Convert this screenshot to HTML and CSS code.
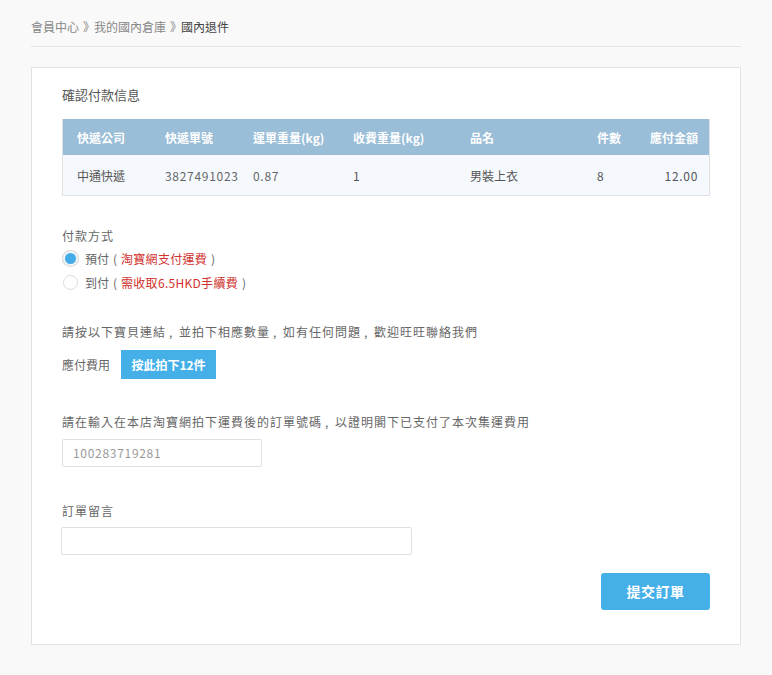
FILE: index.html
```html
<!DOCTYPE html>
<html lang="zh-Hant">
<head>
<meta charset="utf-8">
<link rel="stylesheet" href="styles.css">
</head>
<body>
<div class="page">
  <div class="crumbs">
    <span class="crumb">會員中心</span><span class="sep">》</span><span class="crumb">我的國內倉庫</span><span class="sep">》</span><span class="crumb current">國內退件</span>
  </div>
  <div class="card">
    <div class="title">確認付款信息</div>
    <div class="table">
      <div class="row head">
        <div class="c1">快遞公司</div>
        <div class="c2">快遞單號</div>
        <div class="c3">運單重量(kg)</div>
        <div class="c4">收費重量(kg)</div>
        <div class="c5">品名</div>
        <div class="c6">件數</div>
        <div class="c7">應付金額</div>
      </div>
      <div class="row body">
        <div class="c1">中通快遞</div>
        <div class="c2 num">3827491023</div>
        <div class="c3 num">0.87</div>
        <div class="c4 num">1</div>
        <div class="c5">男裝上衣</div>
        <div class="c6 num">8</div>
        <div class="c7 num">12.00</div>
      </div>
    </div>

    <div class="section pay">
      <div class="label">付款方式</div>
      <div class="radio-row"><span class="radio on"></span>預付<span class="pc">(</span><span class="red">淘寶網支付運費</span><span class="pc">)</span></div>
      <div class="radio-row"><span class="radio"></span>到付<span class="pc">(</span><span class="red">需收取6.5HKD手續費</span><span class="pc">)</span></div>
    </div>

    <div class="section link">
      <div class="label">請按以下寶貝連結<span class="cm">,</span>並拍下相應數量<span class="cm">,</span>如有任何問題<span class="cm">,</span>歡迎旺旺聯絡我們</div>
      <div class="fee-row"><span class="fee-label">應付費用</span><span class="buy-btn">按此拍下12件</span></div>
    </div>

    <div class="section order">
      <div class="label">請在輸入在本店淘寶網拍下運費後的訂單號碼<span class="cm">,</span>以證明閣下已支付了本次集運費用</div>
      <div class="input short">100283719281</div>
    </div>

    <div class="section note">
      <div class="label">訂單留言</div>
      <div class="input long"></div>
    </div>

    <div class="actions"><span class="submit">提交訂單</span></div>
  </div>
</div>
</body>
</html>
```

FILE: styles.css
```css
* { box-sizing: border-box; }
html, body { margin: 0; padding: 0; background: #f9f9f9; }
body {
  font-family: "Noto Sans CJK TC", "Noto Sans CJK SC", sans-serif;
  font-size: 12px;
  color: #666;
}
.page { padding: 17px 31px 30px 31px; width: 772px; }
.crumbs {
  height: 30px;
  line-height: 20px;
  font-size: 12px;
  color: #888;
  border-bottom: 1px solid #e3e3e3;
  white-space: nowrap;
}
.sep { display: inline-block; width: 15px; padding-left: 4px; overflow: hidden; vertical-align: top; }
.crumb.current { color: #444; }

.pc { display: inline-block; width: 12px; text-align: center; }
.cm { display: inline-block; width: 13px; padding-left: 3px; }

.card {
  margin-top: 20px;
  background: #fff;
  border: 1px solid #e2e2e2;
  padding: 17px 30px 34px 30px;
  height: 578px;
}
.title { font-size: 13px; color: #555; line-height: 20px; }

.table {
  margin-top: 14px;
  border: 1px solid #e1e1e1;
  border-top: none;
}
.row { display: flex; align-items: center; }
.row.head { height: 36px; background: #9abdd8; color: #fff; font-weight: bold; }
.row.body { height: 40px; background: #f5f9fd; color: #555; }
.row > div { white-space: nowrap; }
.c1 { width: 102px; padding-left: 14px; }
.c2 { width: 88px; }
.c3 { width: 100px; }
.c4 { width: 117px; }
.c5 { width: 127px; }
.c6 { width: 53px; }
.c7 { width: 48px; text-align: right; }
.num { letter-spacing: 0.7px; }
.row.body .c2, .row.body .c3 { color: #666; }

.label { line-height: 20px; color: #666; font-size: 12px; white-space: nowrap; letter-spacing: 1px; }
.pay { margin-top: 30px; }
.radio-row {
  display: flex;
  align-items: center;
  height: 24px;
  color: #666;
  white-space: nowrap;
}
.radio {
  width: 15px;
  height: 15px;
  border-radius: 50%;
  border: 1px solid #dcdcdc;
  margin: 0 7px 0 1px;
  background: #fff;
  flex: none;
}
.radio.on {
  background: #45abe6;
  border: 2px solid #eef4f9;
  box-shadow: 0 0 0 1px #d8d8d8;
}
.red { color: #d0312d; letter-spacing: 0.3px; }

.link { margin-top: 28px; }
.fee-row { display: flex; align-items: center; margin-top: 8px; }
.fee-label { width: 59px; color: #666; }
.buy-btn {
  display: inline-block;
  background: #45b0e8;
  color: #fff;
  font-weight: bold;
  height: 29px;
  line-height: 29px;
  width: 95px;
  text-align: center;
  white-space: nowrap;
}

.order { margin-top: 33px; }
.input {
  border: 1px solid #e0e0e0;
  border-radius: 2px;
  height: 28px;
  line-height: 26px;
  color: #999;
  letter-spacing: 0.7px;
}
.input.short { width: 200px; margin-top: 7px; padding-left: 10px; }
.note { margin-top: 34px; }
.input.long { width: 351px; margin-top: 6px; margin-left: -1px; }

.actions { display: flex; justify-content: flex-end; margin-top: 18px; }
.submit {
  display: inline-block;
  width: 109px;
  height: 37px;
  line-height: 37px;
  text-align: center;
  background: #45b0e8;
  color: #fff;
  font-size: 14px;
  font-weight: bold;
  border-radius: 3px;
  letter-spacing: 0.5px;
}
```
